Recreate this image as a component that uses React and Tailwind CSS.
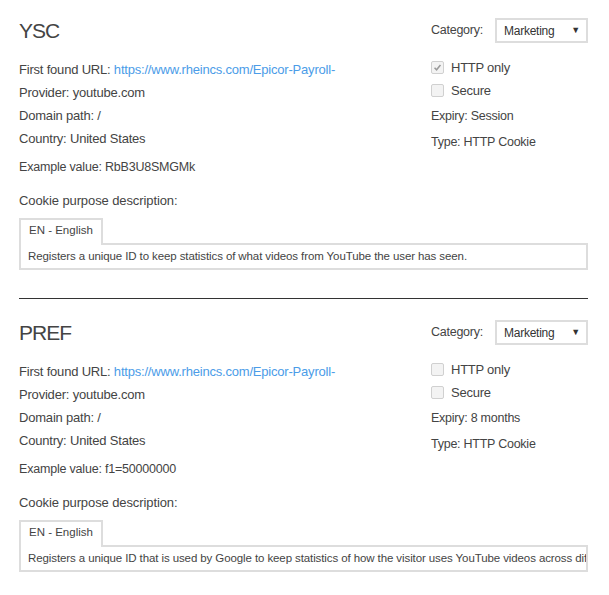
import React from "react";

const cookies = [
  {
    name: "YSC",
    url: "https://www.rheincs.com/Epicor-Payroll-",
    provider: "youtube.com",
    path: "/",
    country: "United States",
    example: "RbB3U8SMGMk",
    httpOnly: true,
    secure: false,
    expiry: "Session",
    type: "HTTP Cookie",
    description:
      "Registers a unique ID to keep statistics of what videos from YouTube the user has seen.",
  },
  {
    name: "PREF",
    url: "https://www.rheincs.com/Epicor-Payroll-",
    provider: "youtube.com",
    path: "/",
    country: "United States",
    example: "f1=50000000",
    httpOnly: false,
    secure: false,
    expiry: "8 months",
    type: "HTTP Cookie",
    description:
      "Registers a unique ID that is used by Google to keep statistics of how the visitor uses YouTube videos across different websites.",
  },
];

function Checkbox({ checked }) {
  return (
    <span className="relative inline-block w-[13px] h-[13px] rounded-[2px] border border-[#d0d0d0] bg-[#f3f3f3]">
      {checked && (
        <svg viewBox="0 0 13 13" className="absolute inset-0 w-full h-full">
          <path d="M3 6.8 L5.4 9.2 L10 3.6" fill="none" stroke="#9a9a9a" strokeWidth="1.8" />
        </svg>
      )}
    </span>
  );
}

function CookieEntry({ cookie, last }) {
  return (
    <div className={last ? "pt-[18px]" : "pt-[15px] pb-[28px] border-b border-[#333]"}>
      <div className="flex justify-between">
        <div>
          <h2 className="text-[21px] leading-[32px] tracking-[-1px] text-[#444]">{cookie.name}</h2>
          <div className="mt-[11px] leading-[23px] text-[13px] tracking-[-0.2px]">
            <p>
              First found URL: <a className="text-[#4b9ce8]" href="#">{cookie.url}</a>
            </p>
            <p>Provider: {cookie.provider}</p>
            <p>Domain path: {cookie.path}</p>
            <p>Country: {cookie.country}</p>
          </div>
          <p className="mt-[6px] leading-[23px] text-[12.5px] tracking-[-0.2px]">
            Example value: {cookie.example}
          </p>
        </div>
        <div className="w-[157px] pt-[3px] text-[12.5px] tracking-[-0.25px]">
          <div className="flex items-center h-[25px]">
            <span className="w-[64px]">Category:</span>
            <div className="flex items-center justify-between w-[93px] h-[25px] border-2 border-[#ddd] pl-[7px] pr-[6px] text-[12px] text-[#333]">
              <span>Marketing</span>
              <span className="text-[9px]">▼</span>
            </div>
          </div>
          <div className="mt-[13px] leading-[23px] text-[13px]">
            <div className="flex items-center gap-[7px]">
              <Checkbox checked={cookie.httpOnly} />
              <span>HTTP only</span>
            </div>
            <div className="flex items-center gap-[7px]">
              <Checkbox checked={cookie.secure} />
              <span>Secure</span>
            </div>
          </div>
          <p className="mt-[1px] leading-[26px]">Expiry: {cookie.expiry}</p>
          <p className="leading-[26px]">Type: {cookie.type}</p>
        </div>
      </div>
      <p className="mt-[10px] leading-[23px] text-[13px] tracking-[-0.1px]">
        Cookie purpose description:
      </p>
      <div className="mt-[5px]">
        <div className="relative z-10 -mb-[2px] inline-block border-2 border-b-0 border-[#ddd] bg-white px-[8px] h-[27px] text-[11.5px] leading-[21px]">
          EN - English
        </div>
        <div className="border-2 border-[#ddd] h-[27px] px-[7px] text-[11.5px] tracking-[-0.1px] leading-[22px] whitespace-nowrap overflow-hidden">
          {cookie.description}
        </div>
      </div>
    </div>
  );
}

export default function App() {
  return (
    <div
      className="bg-white w-[609px] h-[595px] pl-[19px] pr-[21px] text-[#444]"
      style={{ fontFamily: '"Liberation Sans", Arial, sans-serif' }}
    >
      {cookies.map((c, i) => (
        <CookieEntry key={c.name} cookie={c} last={i === cookies.length - 1} />
      ))}
    </div>
  );
}
